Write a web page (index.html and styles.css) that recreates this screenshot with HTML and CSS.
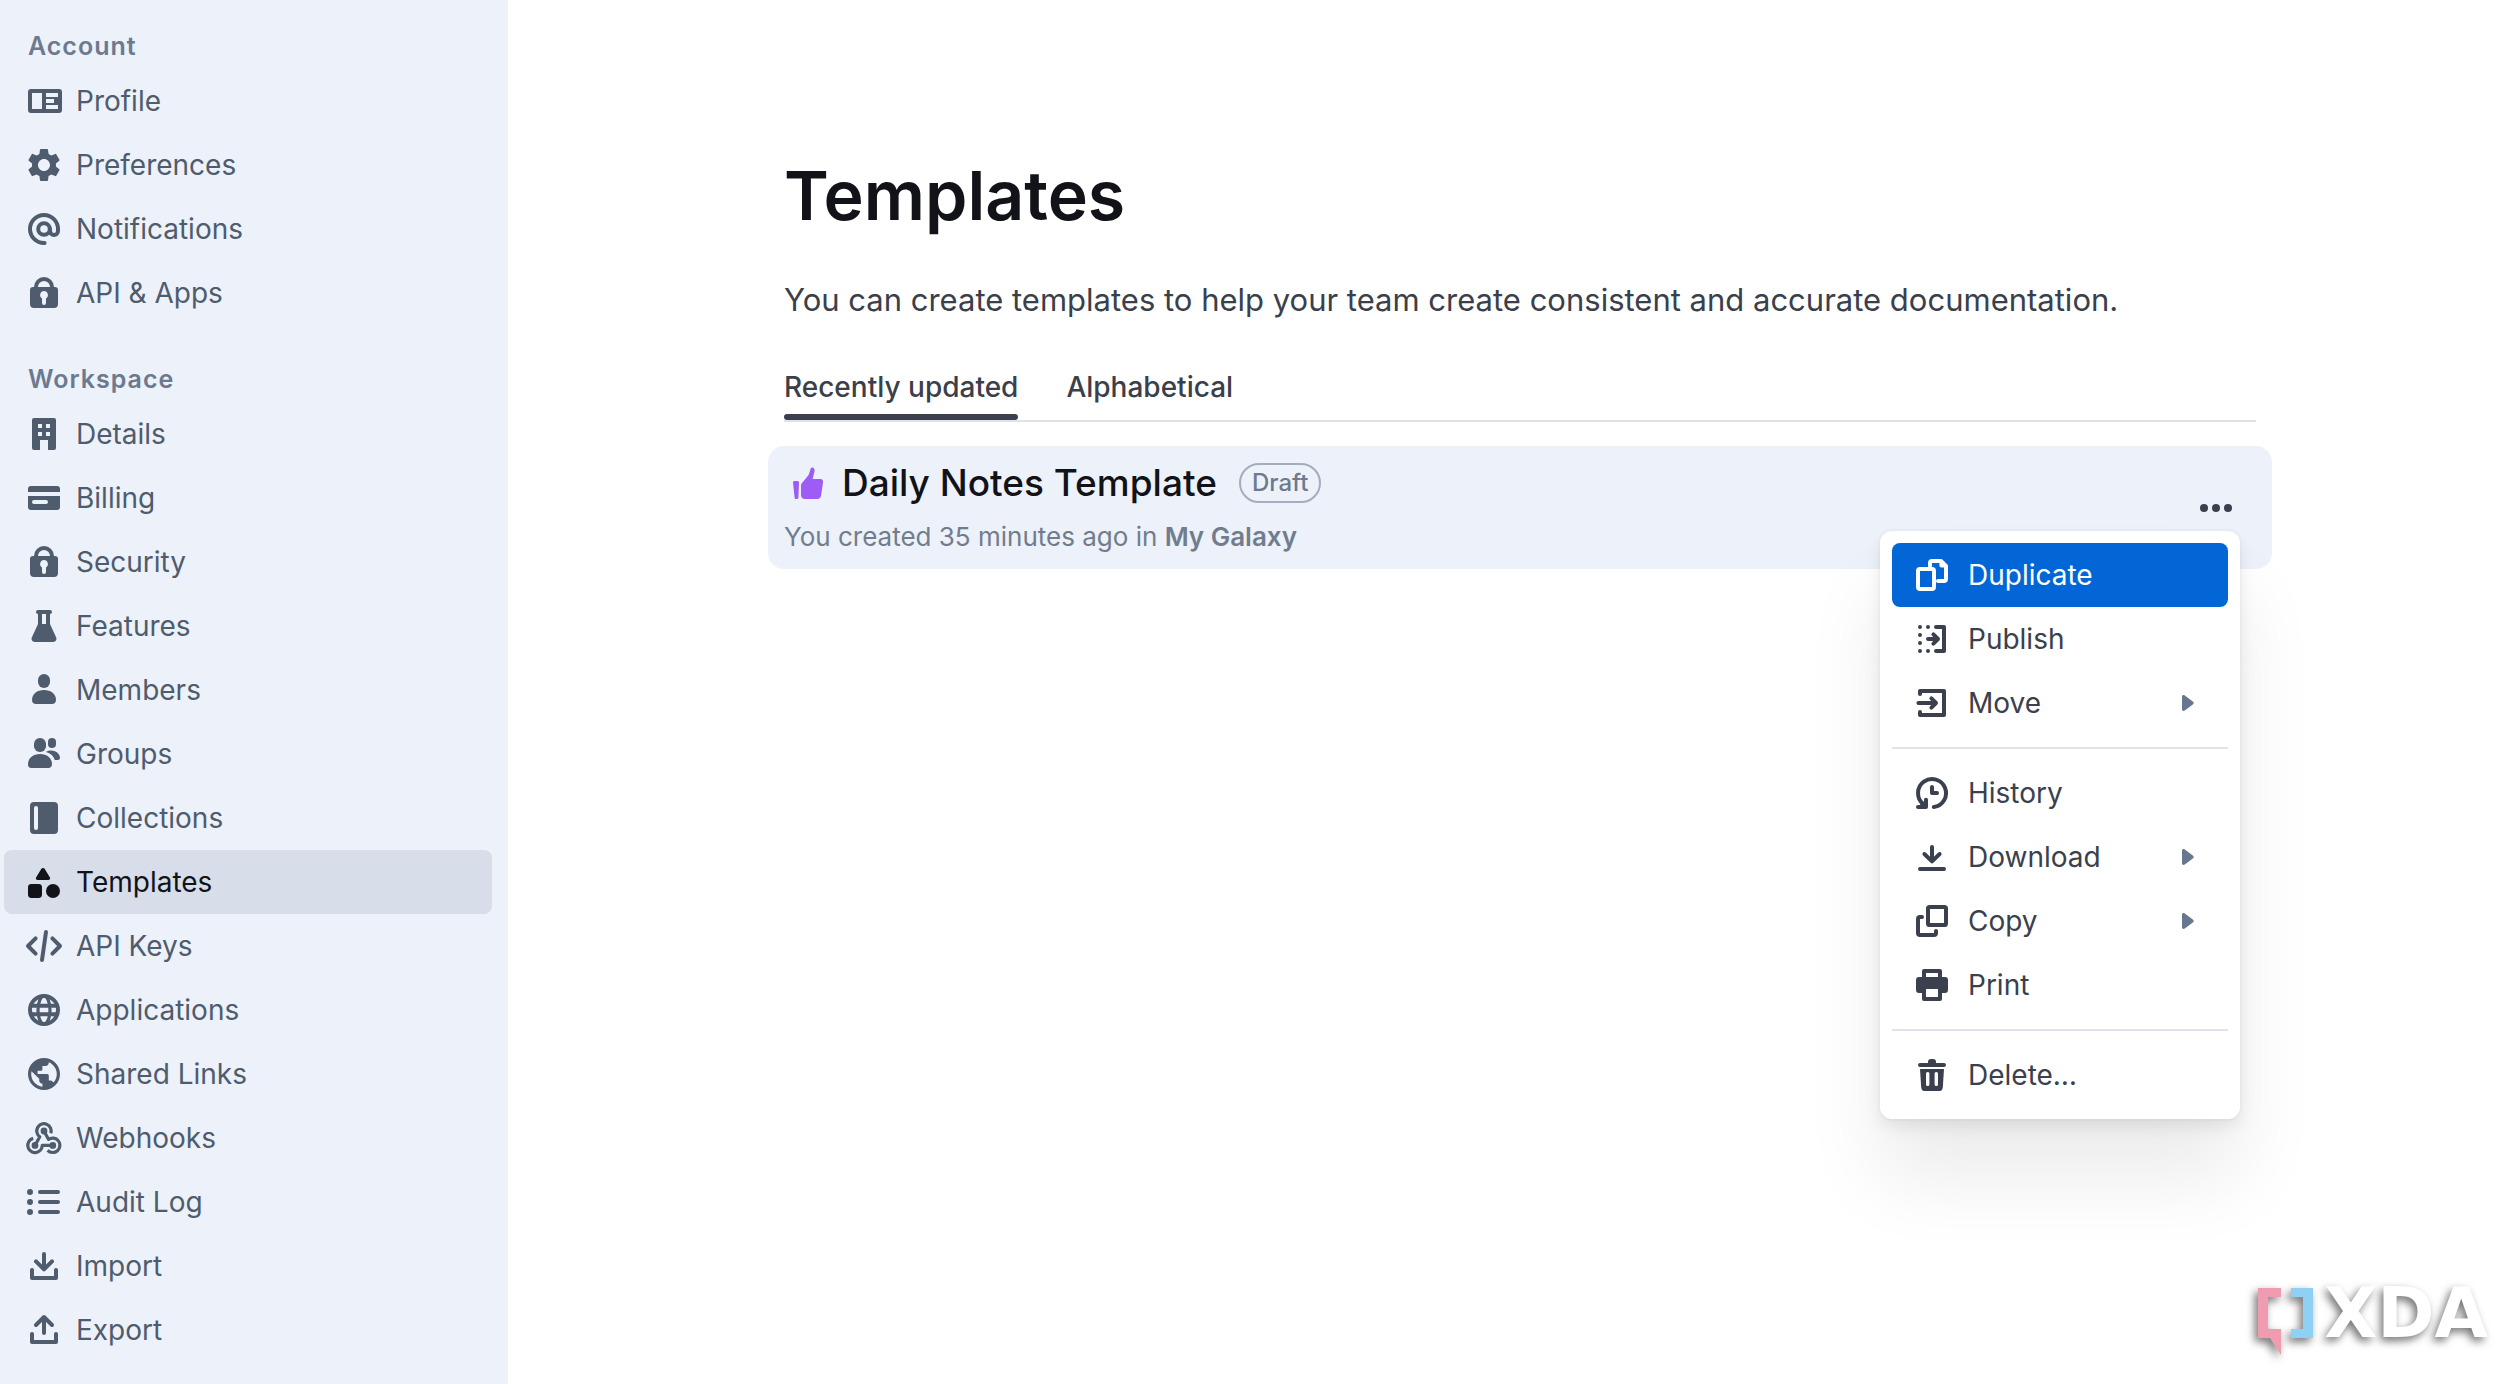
FILE: index.html
```html
<!DOCTYPE html>
<html lang="en">
<head>
<meta charset="utf-8">
<title>Templates</title>
<meta name="viewport" content="width=device-width, initial-scale=1">
<link rel="stylesheet" href="styles.css">
</head>
<body>
<div class="app">
  <nav class="sidebar" aria-label="Settings">
    <section class="group">
      <h2 class="group-title">Account</h2>
      <a class="nav-link" href="#profile">
        <svg class="icon" viewBox="0 0 24 24"><path fill-rule="evenodd" d="M5.5 6h14A1.5 1.5 0 0 1 21 7.500v9a1.500 1.500 0 0 1-1.500 1.500h-14A1.500 1.500 0 0 1 4 16.500v-9A1.500 1.500 0 0 1 5.500 6zM6 8v8h5V8zM13 8v2h6V8zM13 11v2h4v-2zM13 14v2h6v-2z"/></svg>Profile</a>
      <a class="nav-link" href="#preferences">
        <svg class="icon" viewBox="0 0 24 24"><path transform="translate(2 2) scale(.833)" d="M19.140 12.940c.04-.3.06-.61.06-.94 0-.32-.02-.64-.07-.94l2.030-1.580c.18-.14.23-.41.12-.61l-1.920-3.320c-.12-.22-.37-.29-.59-.22l-2.390.96c-.5-.38-1.030-.7-1.620-.94l-.36-2.540c-.04-.24-.24-.41-.48-.41h-3.840c-.24 0-.43.17-.47.41l-.36 2.540c-.59.24-1.130.57-1.620.94l-2.390-.96c-.22-.08-.47 0-.59.22L2.740 8.870c-.12.21-.08.47.12.61l2.030 1.580c-.05.3-.09.63-.09.94s.02.64.07.94l-2.030 1.580c-.18.14-.23.41-.12.61l1.920 3.320c.12.22.37.29.59.22l2.390-.96c.5.38 1.030.7 1.620.94l.36 2.540c.05.24.24.41.48.41h3.840c.24 0 .44-.17.47-.41l.36-2.540c.59-.24 1.130-.56 1.620-.94l2.390.96c.22.08.47 0 .59-.22l1.920-3.320c.12-.22.07-.47-.12-.61l-2.010-1.580zM12 15.600c-1.980 0-3.600-1.620-3.600-3.600s1.620-3.600 3.600-3.600 3.600 1.620 3.600 3.600-1.620 3.600-3.600 3.600z"/></svg>Preferences</a>
      <a class="nav-link" href="#notifications">
        <svg class="icon line" viewBox="0 0 24 24"><circle cx="12" cy="12" r="2.900"/><path d="M12.300 19H12a7 7 0 1 1 7-7v1a2 2 0 0 1-4 0v-1"/></svg>Notifications</a>
      <a class="nav-link" href="#api-apps">
        <svg class="icon" viewBox="0 0 24 24"><path fill-rule="evenodd" d="M7 9a5 5 0 0 1 10 0h.5A1.500 1.500 0 0 1 19 10.500v7a2 2 0 0 1-2 2H7a2 2 0 0 1-2-2v-7A1.500 1.500 0 0 1 6.500 9zM9 9h6a3 3 0 0 0-6 0zM12 11a2 2 0 0 0-1 3.700V17a1 1 0 0 0 2 0v-2.300A2 2 0 0 0 12 11z"/></svg>API &amp; Apps</a>
    </section>
    <section class="group">
      <h2 class="group-title">Workspace</h2>
      <a class="nav-link" href="#details">
        <svg class="icon" viewBox="0 0 24 24"><path fill-rule="evenodd" d="M7 4h10a1 1 0 0 1 1 1v14a1 1 0 0 1-1 1h-3v-5h-4v5H7a1 1 0 0 1-1-1V5a1 1 0 0 1 1-1zM9 7v2h2V7zM13 7v2h2V7zM9 11v2h2v-2zM13 11v2h2v-2z"/></svg>Details</a>
      <a class="nav-link" href="#billing">
        <svg class="icon" viewBox="0 0 24 24"><path fill-rule="evenodd" d="M5.500 6h13A1.500 1.500 0 0 1 20 7.500V9H4V7.500A1.500 1.500 0 0 1 5.500 6zM4 11h16v5.500a1.500 1.500 0 0 1-1.500 1.500h-13A1.500 1.500 0 0 1 4 16.500zM7 13a1 1 0 0 0 0 2h6a1 1 0 0 0 0-2z"/></svg>Billing</a>
      <a class="nav-link" href="#security">
        <svg class="icon" viewBox="0 0 24 24"><path fill-rule="evenodd" d="M7 9a5 5 0 0 1 10 0h.5A1.500 1.500 0 0 1 19 10.500v7a2 2 0 0 1-2 2H7a2 2 0 0 1-2-2v-7A1.500 1.500 0 0 1 6.500 9zM9 9h6a3 3 0 0 0-6 0zM12 11a2 2 0 0 0-1 3.700V17a1 1 0 0 0 2 0v-2.300A2 2 0 0 0 12 11z"/></svg>Security</a>
      <a class="nav-link" href="#features">
        <svg class="icon" viewBox="0 0 24 24"><path fill-rule="evenodd" d="M9 4h6a1 1 0 0 1 0 2v5l3.100 6.800c.4 1.100-.2 2.200-1.500 2.200H7.400c-1.300 0-1.900-1.100-1.500-2.200L9 11V6a1 1 0 0 1 0-2zM11 6v5h2V6z"/></svg>Features</a>
      <a class="nav-link" href="#members">
        <svg class="icon" viewBox="0 0 24 24"><rect x="9" y="4" width="6" height="7" rx="3"/><path d="M6 17c0-3 2.500-5 6-5s6 2 6 5c0 1.200-.8 2-2 2H8c-1.200 0-2-.8-2-2z"/></svg>Members</a>
      <a class="nav-link" href="#groups">
        <svg class="icon" viewBox="0 0 24 24"><rect x="7" y="4" width="6" height="7" rx="2.900"/><rect x="14" y="4" width="4" height="5" rx="2"/><path d="M4 17.300C4 14 6.500 12 10 12s6 2 6 5c0 1.200-.8 2-1.800 2H5.600c-1 0-1.600-.7-1.600-1.700zM13 11c2.800-1.900 7 0 7 2.900 0 .7-.5 1.100-1.100 1.100h-1.500c-.6-2-2-3.400-4.400-4z"/></svg>Groups</a>
      <a class="nav-link" href="#collections">
        <svg class="icon" viewBox="0 0 24 24"><path fill-rule="evenodd" d="M7 4h10a2 2 0 0 1 2 2v12a2 2 0 0 1-2 2H7a2 2 0 0 1-2-2V6a2 2 0 0 1 2-2zM8 6a1 1 0 0 0-1 1v10a1 1 0 0 0 2 0V7a1 1 0 0 0-1-1z"/></svg>Collections</a>
      <a class="nav-link current" href="#templates" aria-current="page">
        <svg class="icon" viewBox="0 0 24 24"><path d="M10.700 5.400a1 1 0 0 1 1.600 0l2.600 4.200c.4.700 0 1.400-.8 1.400H8.900c-.8 0-1.200-.7-.8-1.400z"/><rect x="4" y="13" width="7" height="7" rx="1.700"/><circle cx="16.500" cy="16.500" r="3.500"/></svg>Templates</a>
      <a class="nav-link" href="#api-keys">
        <svg class="icon line" viewBox="0 0 24 24"><path d="M7.800 8.200L4 12l3.800 3.800M16.200 8.200L20 12l-3.800 3.800M13 5l-2 14"/></svg>API Keys</a>
      <a class="nav-link" href="#applications">
        <svg class="icon line" viewBox="0 0 24 24"><circle cx="12" cy="12" r="7"/><ellipse cx="12" cy="12" rx="3" ry="7" stroke-width="1.600"/><path d="M5.500 9.900h13M5.500 14.100h13"/></svg>Applications</a>
      <a class="nav-link" href="#shared-links">
        <svg class="icon" viewBox="0 0 24 24"><path transform="translate(2.400 2.400) scale(.8)" d="M12 2C6.480 2 2 6.480 2 12s4.480 10 10 10 10-4.480 10-10S17.520 2 12 2zm-1 17.930c-3.950-.49-7-3.850-7-7.930 0-.62.08-1.210.21-1.790L9 15v1c0 1.100.9 2 2 2v1.930zm6.900-2.540c-.26-.81-1-1.390-1.900-1.390h-1v-3c0-.55-.45-1-1-1H8v-2h2c.55 0 1-.45 1-1V7h2c1.100 0 2-.9 2-2v-.41c2.930 1.190 5 4.060 5 7.410 0 2.080-.8 3.970-2.100 5.390z"/></svg>Shared Links</a>
      <a class="nav-link" href="#webhooks">
        <svg class="icon line thin" viewBox="0 0 24 24"><path d="M7.500 15.700L9.900 11.400A3.600 3.600 0 1 1 15.400 9.600M12 8.500L14.300 12.700A3.600 3.600 0 1 1 13.800 18.200M16.400 15.700H11.100A3.600 3.600 0 1 1 6.600 12.200"/><circle cx="12" cy="8.500" r=".9"/><circle cx="7.500" cy="15.700" r=".9"/><circle cx="16.400" cy="15.700" r=".9"/></svg>Webhooks</a>
      <a class="nav-link" href="#audit-log">
        <svg class="icon line" viewBox="0 0 24 24"><path d="M10 7h9M10 12h9M10 17h9"/><path stroke-width="3" d="M5 7h0M5 12h0M5 17h0"/></svg>Audit Log</a>
      <a class="nav-link" href="#import">
        <svg class="icon line" viewBox="0 0 24 24"><path d="M12 6v7.500M8 9.700l4 4 4-4M6 14v4h12v-4"/></svg>Import</a>
      <a class="nav-link" href="#export">
        <svg class="icon line" viewBox="0 0 24 24"><path d="M12 13.500V6M8 9.500l4-4 4 4M6 14v4h12v-4"/></svg>Export</a>
    </section>
  </nav>

  <main class="main">
    <div class="content">
      <h1 class="title">Templates</h1>
      <p class="intro">You can create templates to help your team create consistent and accurate documentation.</p>
      <div class="tabs">
        <a class="tab active" href="#recent" aria-current="true">Recently updated</a>
        <a class="tab" href="#alphabetical">Alphabetical</a>
      </div>
      <article class="document">
        <div class="document-text">
          <h3 class="document-heading">
            <svg class="icon thumb" viewBox="0 0 24 24"><path d="M14.600 4.400c.7.300.8 1.200.6 2.100L14.300 10h3.900c1 0 1.500.8 1.300 1.800l-1 6.600c-.2 1-.8 1.600-1.800 1.600h-6.200c-1.200 0-2-.8-2-2v-4.600c0-.6.200-1.200.7-1.700L12.300 8l1-3c.2-.6.7-.9 1.300-.6zM5.200 11h1.500c.5 0 .8.300.8.800l-.3 7.500c0 .4-.3.700-.7.700h-.4c-.5 0-.8-.3-.8-.8l-.8-7.300c0-.5.2-.9.700-.9z"/></svg>
            <span class="document-name">Daily Notes Template</span>
            <span class="badge">Draft</span>
          </h3>
          <p class="meta">You created 35 minutes ago in <strong>My Galaxy</strong></p>
        </div>
        <button class="more" type="button" aria-label="Document options" aria-expanded="true">
          <svg class="icon" viewBox="0 0 24 24"><circle cx="6" cy="12" r="2"/><circle cx="12" cy="12" r="2"/><circle cx="18" cy="12" r="2"/></svg>
        </button>
        <div class="menu" role="menu">
          <button class="menu-item selected" type="button" role="menuitem">
            <svg class="icon line" viewBox="0 0 24 24"><rect x="5" y="9" width="8" height="10" rx="1"/><path d="M11 7.500V6a1 1 0 0 1 1-1h4.500L19 7.500V14a1 1 0 0 1-1 1h-3M16.700 6v1.300H18"/></svg>Duplicate</button>
          <button class="menu-item" type="button" role="menuitem">
            <svg class="icon line" viewBox="0 0 24 24"><path d="M14 6h4v12h-4M10 12h5M12.700 9.700L15 12l-2.300 2.300M6 6h0M10 6h0M6 10h0M6 14h0M6 18h0M10 18h0"/></svg>Publish</button>
          <button class="menu-item" type="button" role="menuitem" aria-haspopup="true">
            <svg class="icon line" viewBox="0 0 24 24"><path d="M6 7.500V6h12v12H6v-1.500M5.200 12h8.800M11.700 9.700L14 12l-2.300 2.300"/></svg>Move
            <svg class="icon arrow" viewBox="0 0 24 24"><path d="M9 9v6c0 .9.700 1.200 1.400.7l4-3c.6-.4.6-1 0-1.400l-4-3C9.700 7.800 9 8.100 9 9z"/></svg></button>
          <hr class="divider">
          <button class="menu-item" type="button" role="menuitem">
            <svg class="icon line" viewBox="0 0 24 24"><path d="M12.900 19A7 7 0 1 0 7.500 17.400M12 9v3h2.500M5 19h4v-3.600M7 17.500L9 19"/></svg>History</button>
          <button class="menu-item" type="button" role="menuitem" aria-haspopup="true">
            <svg class="icon line" viewBox="0 0 24 24"><path d="M12 7v7M8.200 10.500L12 14.200l3.800-3.700M6 18h12"/></svg>Download
            <svg class="icon arrow" viewBox="0 0 24 24"><path d="M9 9v6c0 .9.700 1.200 1.400.7l4-3c.6-.4.6-1 0-1.400l-4-3C9.700 7.800 9 8.100 9 9z"/></svg></button>
          <button class="menu-item" type="button" role="menuitem" aria-haspopup="true">
            <svg class="icon line" viewBox="0 0 24 24"><rect x="10" y="5" width="9" height="9" rx=".8"/><path d="M7 10H6a1 1 0 0 0-1 1v7a1 1 0 0 0 1 1h7a1 1 0 0 0 1-1v-1"/></svg>Copy
            <svg class="icon arrow" viewBox="0 0 24 24"><path d="M9 9v6c0 .9.700 1.200 1.400.7l4-3c.6-.4.6-1 0-1.400l-4-3C9.700 7.800 9 8.100 9 9z"/></svg></button>
          <button class="menu-item" type="button" role="menuitem">
            <svg class="icon" viewBox="0 0 24 24"><path fill-rule="evenodd" d="M8 4h8a1 1 0 0 1 1 1v3h1.500A1.500 1.500 0 0 1 20 9.500v5a1.500 1.500 0 0 1-1.500 1.500H17v3a1 1 0 0 1-1 1H8a1 1 0 0 1-1-1v-3H5.500A1.500 1.500 0 0 1 4 14.500v-5A1.500 1.500 0 0 1 5.500 8H7V5a1 1 0 0 1 1-1zM9 6v2h6V6zM9 14v4h6v-4z"/></svg>Print</button>
          <hr class="divider">
          <button class="menu-item" type="button" role="menuitem">
            <svg class="icon" viewBox="0 0 24 24"><path fill-rule="evenodd" d="M10 6V5.500A1.500 1.500 0 0 1 11.500 4h1A1.500 1.500 0 0 1 14 5.500V6h4a1 1 0 0 1 0 2H6a1 1 0 0 1 0-2zM6 9h12l-.6 9.200a2 2 0 0 1-2 1.800H8.600a2 2 0 0 1-2-1.800zM9.800 10.500a.8.800 0 0 0-.8.800v5.400a.8.800 0 0 0 1.700 0v-5.400a.8.800 0 0 0-.9-.8zM14.200 10.500a.8.800 0 0 0-.9.800v5.400a.8.800 0 0 0 1.700 0v-5.400a.8.800 0 0 0-.8-.8z"/></svg>Delete…</button>
        </div>
      </article>
    </div>
  </main>

  <div class="watermark">
    <svg class="watermark-mark" viewBox="0 0 56 68" aria-hidden="true"><path fill="#f09cb0" d="M0 0h23v9H10v32h13v26L12 50H0z"/><path fill="#8fd0f5" d="M33 0h22v50H33v-9h12V9H33z"/></svg>
    <span class="watermark-name">XDA</span>
  </div>
</div>
</body>
</html>
```
FILE: styles.css
```css
:root {
  --panel: #edf1f9;
  --slate: #4e5c6e;
  --muted: #6b7a8f;
  --ink: #111319;
  --text: #3a404b;
  --rule: #dfe2e8;
  --accent: #0366d6;
}

* {
  box-sizing: border-box;
}

body {
  margin: 0;
  background: #fff;
  color: var(--text);
  font-family: Inter, "Liberation Sans", sans-serif;
  font-size: 28px;
}

h1, h2, h3, p {
  margin: 0;
}

.app {
  position: relative;
  display: flex;
  min-height: 100vh;
}

.icon {
  flex: none;
  width: 48px;
  height: 48px;
  fill: currentColor;
}

.line {
  fill: none;
  stroke: currentColor;
  stroke-width: 2;
  stroke-linecap: round;
  stroke-linejoin: round;
}

.thin {
  stroke-width: 1.6;
  stroke-linecap: butt;
}

/* Sidebar */

.sidebar {
  display: flex;
  flex: none;
  flex-direction: column;
  gap: 32px;
  width: 508px;
  padding: 24px 16px 20px 4px;
  background: var(--panel);
}

.group-title {
  padding-left: 24px;
  color: var(--muted);
  font-size: 25px;
  font-weight: 600;
  line-height: 45px;
  letter-spacing: 1px;
}

.nav-link {
  display: flex;
  align-items: center;
  gap: 8px;
  height: 64px;
  padding: 0 16px;
  border-radius: 8px;
  color: var(--slate);
  text-decoration: none;
}

.nav-link.current {
  background: #d7dee9;
  color: var(--ink);
}

/* Page */

.main {
  flex: 1;
  padding: 148px 40px 40px 60px;
}

.content {
  max-width: 1472px;
  margin: 0 auto;
}

.title {
  color: var(--ink);
  font-size: 68px;
  font-weight: 600;
  line-height: 94px;
}

.intro {
  margin-top: 34px;
  font-size: 31px;
  line-height: 48px;
}

.tabs {
  display: flex;
  gap: 48px;
  margin-top: 43px;
  border-bottom: 2px solid var(--rule);
}

.tab {
  position: relative;
  padding-bottom: 13px;
  color: var(--text);
  font-weight: 500;
  line-height: 40px;
  text-decoration: none;
}

.tab.active::after {
  content: "";
  position: absolute;
  right: 0;
  bottom: 0;
  left: 0;
  height: 6px;
  border-radius: 3px;
  background: #3a404d;
}

.document {
  position: relative;
  display: flex;
  align-items: center;
  justify-content: space-between;
  margin: 24px -16px 0;
  padding: 12px 32px 12px 16px;
  border-radius: 16px;
  background: var(--panel);
}

.document-heading {
  display: flex;
  align-items: center;
  gap: 10px;
  color: var(--ink);
  font-size: 37px;
  font-weight: 500;
  line-height: 50px;
}

.thumb {
  color: #9e5cf7;
}

.badge {
  margin-left: 12px;
  padding: 0 11px;
  border: 2px solid #a3adbd;
  border-radius: 20px;
  color: var(--muted);
  font-size: 24px;
  font-weight: 500;
  line-height: 36px;
}

.meta {
  margin-top: 9px;
  color: #717d8e;
  font-size: 26px;
  line-height: 40px;
}

.meta strong {
  font-weight: 600;
}

.more {
  display: flex;
  padding: 0;
  border: 0;
  background: none;
  color: #3a404d;
}

/* Context menu */

.menu {
  position: absolute;
  top: 85px;
  right: 32px;
  width: 360px;
  padding: 12px;
  border-radius: 12px;
  background: #fff;
  box-shadow: 0 0 0 2px rgb(0 0 0 / 2%), 0 8px 16px rgb(0 0 0 / 8%), 0 60px 80px rgb(0 0 0 / 8%);
}

.menu-item {
  display: flex;
  align-items: center;
  gap: 12px;
  width: 100%;
  height: 64px;
  padding: 0 16px;
  border: 0;
  border-radius: 8px;
  background: none;
  color: #3a404d;
  font: inherit;
  text-align: left;
}

.menu-item.selected {
  background: var(--accent);
  color: #fff;
}

.arrow {
  margin-left: auto;
  color: #66778f;
}

.divider {
  height: 2px;
  margin: 12px 0;
  border: 0;
  background: var(--rule);
}

/* Publisher mark in the corner */

.watermark {
  position: absolute;
  right: 24px;
  bottom: 28px;
  display: flex;
  gap: 10px;
  filter: drop-shadow(-3px 4px 4px rgb(0 0 0 / 55%));
}

.watermark-mark {
  width: 56px;
  height: 68px;
}

.watermark-name {
  color: #fff;
  font-family: "DejaVu Sans", sans-serif;
  font-size: 69px;
  font-weight: 700;
  line-height: 50px;
}
```
